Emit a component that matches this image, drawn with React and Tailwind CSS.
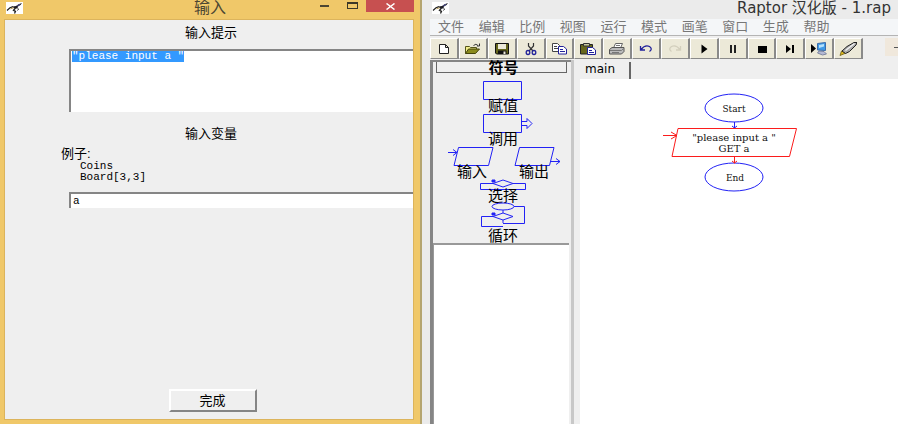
import React, { useEffect, useRef, useState } from 'react';

function Logo() {
  return (
    <svg className="h-3 w-[17px] bg-white" viewBox="0 0 17 12" fill="none" aria-hidden="true">
      <path d="M1 8.5 L4 5.8 L7 4.6" stroke="#222" strokeWidth="1.2" />
      <path d="M4.5 6.8 L8 5.6" stroke="#b99c54" strokeWidth="1" />
      <path d="M6.5 4.6 L10 4 L12.5 2.2 L16 1 L14.5 3 L12 4.6 L11 6.6 L8.5 6.6Z" fill="#1c1c24" />
      <path d="M9.5 6 L7.5 8.3 L9.5 9.3 L8.5 11.5" stroke="#222" strokeWidth="1.3" />
      <path d="M11 5.5 L12.6 7 L11.5 8.5" stroke="#333" strokeWidth="1" />
      <path d="M11 4 L14 2.4" stroke="#5a5ab0" strokeWidth="0.8" />
    </svg>
  );
}

const tools = [
  {
    name: '新建',
    icon: <path d="M4.5 2.5h6l3 3v6h-9z M10.5 2.5v3h3" fill="#fff" stroke="#222" />,
  },
  {
    name: '打开',
    icon: (
      <>
        <path d="M1.5 11.5v-7h4l1 1h6v2" fill="#f3ef8a" stroke="#55551a" />
        <path d="M1.5 11.5l3-4.5h11l-4 4.5z" fill="#8a8a1c" stroke="#44440c" />
        <path d="M9.5 3.5q2.5-2.5 4.5 0M15.500 1.500v2.500h-2.500" fill="none" stroke="#333" />
      </>
    ),
  },
  {
    name: '保存',
    icon: (
      <>
        <path d="M2.500 1.500h13v10.500h-12l-1-1z" fill="#66661c" stroke="#111" />
        <path d="M5 2h8v5H5z" fill="#ece9d8" />
        <path d="M5 8.500h8.500V12H5z" fill="#111" />
        <path d="M10.500 9.500h2V12h-2z" fill="#ece9d8" />
      </>
    ),
  },
  {
    name: '剪切',
    icon: (
      <g fill="none">
        <path d="M6.500 1v3l4.500 5M11.500 1v3l-4.500 5" stroke="#333" strokeWidth="1.200" />
        <ellipse cx="6" cy="10.500" rx="1.800" ry="2" stroke="#22229a" strokeWidth="1.300" />
        <ellipse cx="12" cy="10.500" rx="1.800" ry="2" stroke="#22229a" strokeWidth="1.300" />
      </g>
    ),
  },
  {
    name: '复制',
    icon: (
      <>
        <path d="M2.500 1.500h5l2 2v6h-7z" fill="#fff" stroke="#444" />
        <path d="M4 4.500h3M4 6.500h4" stroke="#444" />
        <path d="M8.500 4.500h5l3 2.500v5h-8z" fill="#fff" stroke="#22229a" />
        <path d="M10 7.500h3M10 9.500h5" stroke="#22229a" />
      </>
    ),
  },
  {
    name: '粘贴',
    icon: (
      <>
        <path d="M1.500 2.500h12v9.500h-12z" fill="#66661c" stroke="#222" />
        <path d="M4.500 1.500h6v2.500h-6z" fill="#c9c9a0" stroke="#333" />
        <path d="M8.500 5.500h5l3 2.500v4.500h-8z" fill="#fff" stroke="#22229a" />
        <path d="M10 8.500h3M10 10.500h5" stroke="#22229a" />
      </>
    ),
  },
  {
    name: '打印',
    icon: (
      <>
        <path d="M5.500 6l2-4.500h7L12.500 6z" fill="#fff" stroke="#666" />
        <path d="M1.500 7.500l2.500-2h12v4l-2.500 2.500h-12z" fill="#bbb" stroke="#555" />
        <path d="M2 8.500h11.500l2-2M4 10.500h7M8 3.500h4" fill="none" stroke="#777" />
      </>
    ),
  },
  {
    name: '撤消',
    icon: (
      <path
        d="M3.500 4v4h4.500M4 7.500q4-5 8.500-3 3.500 2.500 0 5"
        fill="none"
        stroke="#22229a"
        strokeWidth="1.300"
      />
    ),
  },
  {
    name: '重做',
    icon: (
      <path
        d="M14.500 4v4h-4.500M14 7.500q-4-5-8.500-3-3.500 2.500 0 5"
        fill="none"
        stroke="#d3cfbd"
        strokeWidth="1.300"
      />
    ),
  },
  { name: '运行', icon: <path d="M6.500 2.500l6 4.500-6 4.500z" fill="#000" /> },
  { name: '暂停', icon: <path d="M6 3h2v8H6zM10 3h2v8h-2z" fill="#222" /> },
  { name: '停止', icon: <path d="M5 4h9v7H5z" fill="#000" /> },
  { name: '单步', icon: <path d="M5 3l5 4-5 4zM11 3h2v8h-2z" fill="#000" /> },
  {
    name: '测试服务器',
    icon: (
      <>
        <path d="M1 2l5 4.500-5 4.500z" fill="#000" />
        <path d="M7.500 1.500l8-1v8l-8-.5z" fill="#3f9be8" stroke="#3c6ca8" />
        <path d="M9 3l5-1v2.500L9 6z" fill="#b5e1fb" />
        <path d="M9 9l5 .5 2.500 2.500-4 1-5-2z" fill="#b4b9d4" stroke="#6b7390" strokeWidth=".8" />
      </>
    ),
  },
  {
    name: '画笔',
    icon: (
      <>
        <path d="M1 13.500l1.500-4.500 4.500 2z" fill="#ddb81c" stroke="#6b5a10" strokeWidth=".8" />
        <path d="M3 9l5-4.500L15 .5h3l-1 2.500-6.500 6.500-4 2z" fill="#aaa" stroke="#222" />
        <path d="M6.500 8.500L15.500 1.500" stroke="#f5f5f5" strokeWidth="1.200" />
      </>
    ),
  },
];

const menus = ['文件', '编辑', '比例', '视图', '运行', '模式', '画笔', '窗口', '生成', '帮助'];

function PaletteButton({ label, height, children }) {
  return (
    <button className="flex w-[62px] flex-col items-center text-[15px] leading-[15px]">
      <svg
        className={`${height} w-[62px] overflow-visible`}
        fill="none"
        stroke="#2222f5"
        strokeWidth="1"
        aria-hidden="true"
      >
        {children}
      </svg>
      {label}
    </button>
  );
}

function Palette() {
  return (
    <div className="flex flex-col items-center gap-px pl-[2px]">
      <PaletteButton label="赋值" height="h-[17px]">
        <path d="M11.500 .5h38v18h-38z" />
      </PaletteButton>
      <PaletteButton label="调用" height="h-[17px]">
        <path d="M11.500 .5h38v18h-38z" />
        <path d="M50 7.500h5v-3l5 5-5 5v-3h-5" />
      </PaletteButton>
      <div className="flex">
        <PaletteButton label="输入" height="h-[17px]">
          <path d="M17.500 .5h34.500l-4.500 18H13z M7 5.500h9M12 2.500l4 3-4 3" />
        </PaletteButton>
        <PaletteButton label="输出" height="h-[17px]">
          <path d="M16.500 .5h34.500l-4.500 18H12z M48 14.500h9M53 11.500l4 3-4 3" />
        </PaletteButton>
      </div>
      <PaletteButton label="选择" height="h-2">
        <path d="M21 3.500H8.500v6h45v-6H41M21 3.500l10-3.500 10 3.500-10 3.500z" />
        <path d="M20 0h3v2h-3z" fill="#2222f5" />
      </PaletteButton>
      <PaletteButton label="循环" height="h-6">
        <ellipse cx="31" cy="2.500" rx="11" ry="3.500" />
        <path d="M42 2.500h10.500v17H31M31 6v3M21 12.500l10-3.500 10 3.500-10 3.500z" />
        <path d="M21 12.500H9.500v10H31M31 16v3" />
        <path d="M20 9h3v2h-3z" fill="#2222f5" />
      </PaletteButton>
    </div>
  );
}

function FlowChart() {
  return (
    <svg
      className="h-[110px] w-[150px] font-['DejaVu_Serif',serif] text-[9px]"
      viewBox="0 0 150 110"
      fill="none"
    >
      <g stroke="#2222f5">
        <ellipse cx="74" cy="18" rx="29" ry="14" />
        <path d="M74.500 32v6M72 36l2.500 2 2.500-2" />
        <ellipse cx="74" cy="87" rx="29" ry="14" />
      </g>
      <g stroke="#fb1c1c">
        <path d="M18 38.500h118.500l-7 28H12z" />
        <path d="M3 45.500h14M11 42l6 3.500-6 3.500M74.500 67v6M72 71l2.500 2 2.500-2" />
      </g>
      <g fill="#111" textAnchor="middle">
        <text x="74" y="22">Start</text>
        <text x="75" y="91">End</text>
      </g>
      <g fill="#111" textAnchor="middle" className="text-[10px]">
        <text x="74" y="51">"please input a "</text>
        <text x="74" y="62">GET a</text>
      </g>
    </svg>
  );
}

function InputDialog() {
  const [prompt, setPrompt] = useState('"please input a "');
  const [variable, setVariable] = useState('a');
  const promptRef = useRef(null);

  // the prompt is selected when the dialog opens
  useEffect(() => {
    promptRef.current.focus();
    promptRef.current.select();
  }, []);

  return (
    <section className="flex w-[47%] flex-col border-r-2 border-[#b5a570] bg-[#f0c869] pb-1 pl-1 pr-[6px]">
      <header className="flex h-[19px] items-start">
        <div className="pl-[2px] pt-[2px]">
          <Logo />
        </div>
        <h1 className="flex-1 pl-[87px] text-center text-[16px] leading-4 text-[#4c4632]">输入</h1>
        <button aria-label="最小化" className="flex h-3 w-[28px] items-center justify-center">
          <span className="h-[2px] w-[9px] bg-[#4c4632]" />
        </button>
        <button aria-label="最大化" className="flex h-[10px] w-[28px] items-center justify-center">
          <span className="h-[7px] w-[11px] border border-t-2 border-[#3c3828]" />
        </button>
        <button aria-label="关闭" className="flex h-3 w-12 items-center justify-center bg-[#c75050]">
          <svg className="h-[7px] w-[9px]" viewBox="0 0 9 7" stroke="#fff" strokeWidth="1.500">
            <path d="M.5 .5l8 6M8.500 .5l-8 6" />
          </svg>
        </button>
      </header>
      <form
        className="flex flex-1 flex-col border border-[#dcb45c] bg-[#efefef] text-black"
        onSubmit={(e) => e.preventDefault()}
      >
        <label htmlFor="prompt" className="pb-2 pl-1 pt-[5px] text-center text-[13px] leading-4">
          输入提示
        </label>
        <textarea
          id="prompt"
          ref={promptRef}
          value={prompt}
          onChange={(e) => setPrompt(e.target.value)}
          className="ml-16 h-[63px] resize-none border-l-2 border-t-2 border-[#858585] bg-white px-px font-['Liberation_Mono',monospace] text-[11px] leading-[11px] outline-none selection:bg-[#3399ff] selection:text-white"
        />
        <label htmlFor="variable" className="pl-1 pt-[14px] text-center text-[13px] leading-4">
          输入变量
        </label>
        <div className="pl-14 pt-1">
          <p className="text-[13px] leading-[15px]">例子:</p>
          <p className="pl-[19px] font-['Liberation_Mono',monospace] text-[11px] leading-[11px]">Coins</p>
          <p className="pl-[19px] font-['Liberation_Mono',monospace] text-[11px] leading-[11px]">Board[3,3]</p>
        </div>
        <input
          id="variable"
          value={variable}
          onChange={(e) => setVariable(e.target.value)}
          className="ml-16 mt-[9px] h-4 border-l-2 border-t-2 border-[#858585] bg-white px-[2px] font-['Liberation_Mono',monospace] text-[11px] leading-3 outline-none"
        />
        <button className="mb-[7px] ml-[7px] mt-auto h-[23px] w-[88px] self-center border-2 border-b-[#858585] border-l-white border-r-[#858585] border-t-white text-[13px] leading-4">
          完成
        </button>
      </form>
    </section>
  );
}

function RaptorWindow() {
  return (
    <section className="flex min-w-0 flex-1 flex-col bg-[#ebebeb] pl-2">
      <header className="flex h-[19px] items-start justify-between pl-[2px] pr-[7px] pt-[2px]">
        <Logo />
        <h1 className="font-['DejaVu_Sans','Noto_Sans_CJK_SC',sans-serif] text-[15px] leading-[13px] text-[#333]">
          Raptor 汉化版 - 1.rap
        </h1>
      </header>
      <nav className="border-b border-[#b4b4b4] bg-[#f4f6f8] pl-2">
        <div className="grid w-[406px] grid-cols-10 text-[13px] leading-4 text-[#777]">
          {menus.map((menu) => (
            <button key={menu} className="text-left">
              {menu}
            </button>
          ))}
        </div>
      </nav>
      <div className="flex h-6 items-start justify-between bg-[#efefef] pt-[2px]">
        <div className="grid h-[21px] w-[433px] grid-cols-15">
          {tools.map((tool) => (
            <button
              key={tool.name}
              aria-label={tool.name}
              className="flex items-center justify-center border border-r-2 border-b-[#8a8a8a] border-l-white border-r-[#8a8a8a] border-t-white bg-[#ece9d8]"
            >
              <svg className="h-[14px] w-[18px]" viewBox="0 0 18 14">
                {tool.icon}
              </svg>
            </button>
          ))}
        </div>
        <div className="flex h-[18px] w-[13px] items-center justify-end bg-[#f0e8dc]">
          <span className="h-px w-1 bg-[#555]" />
        </div>
      </div>
      <div className="flex min-h-0 flex-1 bg-[#efefef]">
        <aside className="flex w-[141px] flex-col border-l-[3px] border-t-2 border-[#858585]">
          <h2 className="ml-[3px] mr-1 h-[11px] border-b border-l border-r border-[#666] pl-1 text-center text-[15px] font-bold leading-[11px]">
            符号
          </h2>
          <div className="h-2" />
          <Palette />
          <div className="mr-[2px] flex-1 border-l border-t-2 border-[#999] bg-white" />
        </aside>
        <div className="w-2 border-l-[3px] border-[#c8c8c8]" />
        <main className="flex min-w-0 flex-1 flex-col">
          <div role="tablist" className="flex h-[19px] items-end">
            <button
              role="tab"
              aria-selected="true"
              className="h-[17px] border-r-2 border-[#666] pb-1 pl-[6px] pr-[14px] font-['DejaVu_Sans',sans-serif] text-[12px] leading-3 text-black"
            >
              main
            </button>
          </div>
          <div className="ml-px flex-1 bg-white pl-20 pt-[11px]">
            <FlowChart />
          </div>
        </main>
      </div>
    </section>
  );
}

export default function App() {
  return (
    <div className="flex h-screen overflow-hidden font-['Liberation_Sans','Noto_Sans_CJK_SC',sans-serif]">
      <InputDialog />
      <RaptorWindow />
    </div>
  );
}
